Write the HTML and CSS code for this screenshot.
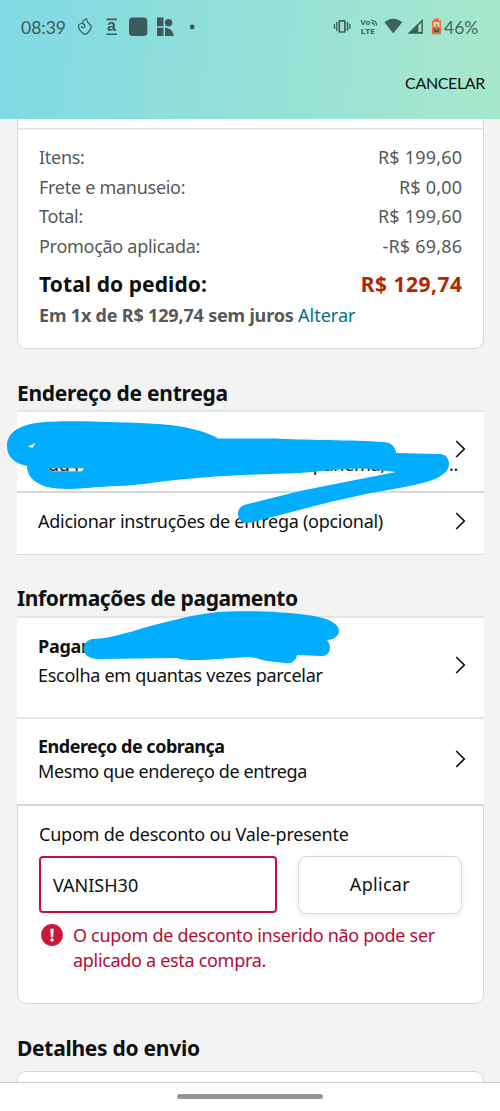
FILE: index.html
```html
<!DOCTYPE html>
<html lang="pt-BR">
<head>
<meta charset="utf-8">
<title>Finalizar pedido</title>
<link rel="stylesheet" href="styles.css">
</head>
<body>
<div class="screen">
  <header class="top">
    <div class="status">
      <span class="clock">08:39</span>
      <svg class="status-left" width="120" height="24" viewBox="77 15 120 24">
        <path d="M78.600 25.200C80.500 22.600 84.800 23.200 84.900 25.700C84.900 28.200 81.600 28.200 81.700 26M78.600 25.200C77.800 28.500 79.800 30.500 82 32.500C84.300 34.900 85.800 34.900 88 32.500C90 30.400 91.300 28.700 91.200 26.700C91 24.500 88.200 23.500 87.500 21.800C87.100 20.600 87.100 19.900 86.500 18.800C84.300 19.700 82.400 21.200 82.200 23.500" fill="none" stroke="#3b5b5b" stroke-width="1.200"/>
        <path d="M106.500 19.400h10.500M106.500 34.200h10.500" stroke="#3b5b5b" stroke-width="1.600"/>
        <text class="glyph-a" x="107" y="31.300">a</text>
        <rect x="129" y="17.500" width="18.300" height="18.500" rx="3.500" fill="#3b5b5b"/>
        <path d="M157 17.600h6.500v8.600H157zM157 27.700h6.500V36H157zM165 27.700c5 .2 8.500 3.800 8.800 8.300H165z" fill="#3b5b5b"/>
        <circle cx="168.600" cy="22.800" r="3.700" fill="#3b5b5b"/>
        <circle cx="192.200" cy="27" r="2.400" fill="#3b5b5b"/>
      </svg>
      <svg class="status-right" width="112" height="24" viewBox="332 15 112 24">
        <rect x="339.300" y="20.800" width="5.600" height="11.200" rx=".6" fill="none" stroke="#3e6259" stroke-width="1.700"/>
        <path d="M336.800 22v9M347.500 22v9M334.500 24v5M349.800 24v5" stroke="#3e6259" stroke-width="1.400"/>
        <text class="volte" x="360.500" y="25.300">Vo</text>
        <text class="volte" x="360.800" y="33.700" textLength="14" lengthAdjust="spacingAndGlyphs">LTE</text>
        <path d="M371.300 20.300c3-.2 5.400 2 5.500 5.200M371.300 22.700c1.900 0 3.100 1.200 3.200 3" fill="none" stroke="#3e6259" stroke-width="1.200"/>
        <path d="M384.500 22.300c5.200-4.800 12.300-4.800 17.600 0L393.300 33.500z" fill="#3e6259"/>
        <path d="M407.500 33.700L422.900 18.800V33.700zM418.400 25.300V32h3v-9.500z" fill="#3e6259" fill-rule="evenodd"/>
        <path d="M434 18.500h5v2h2v13.700h-9V20.500h2z" fill="#ff6536"/>
        <path d="M433.500 22h6v10.500h-6z" fill="#a7e3c5"/>
        <path d="M433.500 27.800h6v4.700h-6z" fill="#3e6259"/>
        <path d="M436.500 24.300v6M434 27.500h5" stroke="#ff6536" stroke-width="1.700"/>
      </svg>
      <span class="battery">46%</span>
    </div>
    <div class="toolbar"><span class="cancel">CANCELAR</span></div>
  </header>

  <main class="content">
    <section class="summary">
      <div class="line"><span>Itens:</span><span class="price">R$ 199,60</span></div>
      <div class="line"><span>Frete e manuseio:</span><span class="price">R$ 0,00</span></div>
      <div class="line"><span>Total:</span><span class="price">R$ 199,60</span></div>
      <div class="line"><span>Promoção aplicada:</span><span class="price">-R$ 69,86</span></div>
      <div class="total"><span>Total do pedido:</span><span class="total-price">R$ 129,74</span></div>
      <div class="installments"><b>Em 1x de R$ 129,74 sem juros</b> <a class="link">Alterar</a></div>
    </section>

    <h2 class="heading">Endereço de entrega</h2>
    <section class="list">
      <div class="row address">
        <div class="address-line"><span class="addr-a">du P</span><span class="addr-b">, Ipanema,</span><span>..</span></div>
        <svg class="chevron" width="12" height="18" viewBox="0 0 12 18"><path d="M1.200 1L9.300 9l-8.100 8"/></svg>
      </div>
      <div class="row instructions">
        <span>Adicionar instruções de entrega (opcional)</span>
        <svg class="chevron" width="12" height="18" viewBox="0 0 12 18"><path d="M1.200 1L9.300 9l-8.100 8"/></svg>
      </div>
    </section>

    <h2 class="heading payment-heading">Informações de pagamento</h2>
    <section class="list">
      <div class="row pay">
        <div><div class="pay-title">Pagar</div><div class="pay-sub">Escolha em quantas vezes parcelar</div></div>
        <svg class="chevron" width="12" height="18" viewBox="0 0 12 18"><path d="M1.200 1L9.300 9l-8.100 8"/></svg>
      </div>
      <div class="row billing">
        <div><div class="billing-title">Endereço de cobrança</div><div class="billing-sub">Mesmo que endereço de entrega</div></div>
        <svg class="chevron" width="12" height="18" viewBox="0 0 12 18"><path d="M1.200 1L9.300 9l-8.100 8"/></svg>
      </div>
    </section>
    <section class="coupon">
      <div class="coupon-label">Cupom de desconto ou Vale-presente</div>
      <div class="coupon-form">
        <div class="field"><span>VANISH30</span></div>
        <div class="apply"><span>Aplicar</span></div>
      </div>
      <div class="error">
        <svg class="alert" width="22" height="22" viewBox="0 0 22 22"><circle cx="11" cy="11" r="10.900" fill="#cc1838"/><path d="M9.300 4.800h3.400l-.5 8.400H9.800z" fill="#fff"/><circle cx="11" cy="15.900" r="1.700" fill="#fff"/></svg>
        <div class="error-text"><div>O cupom de desconto inserido não pode ser</div><div>aplicado a esta compra.</div></div>
      </div>
    </section>
    <h2 class="heading shipping-heading">Detalhes do envio</h2>
    <section class="shipping"></section>
  </main>
  <footer class="nav"><div class="handle"></div></footer>

  <svg class="scribbles" width="500" height="1111" viewBox="0 0 500 1111">
    <path fill-rule="evenodd" d="M7 446C7 432 21 425 36 423C50 421 80 421 110 422C145 423 167 424 184 427C199 430 211 434 218 438.500H275C300 440 355 440 383 442C391 442.500 396 447 396 453L440 454C445 454 449 458 449 464C449 472 440 478 426 482C409 487 380 491 366 494L330 502L249 523C242 524 238 519 238 514C238 508 242 505 248 504L300 491L340 483L396 472C383 470.500 370 468.500 358 468.500C335 469 315 473 270 474C225 475 190 478 158 482C135 486 115 486 97 487C82 489 60 490 47 487C35 483 27 477 27 466C14 463 7 457 7 446zM28 446.500L35.500 443L32.500 448zM49 468.300H84L82 471.300H51z"/>
    <path d="M92 639C105 639 120 635 140 629C168 621 192 615 218 612C248 610 294 612 319 617C332 620 339 625 339 631C339 636 333 640 327 640C332 645 331 656 321 656L297 655C296 661 291 664 285 663C275 662 264 661 256 658L248 657L202 660C190 660 183 660 177 658L99 659C79 659 80 642 92 639z"/>
  </svg>
</div>
</body>
</html>
```
FILE: styles.css
```css
* { box-sizing: border-box; }
body { margin: 0; font-family: "Noto Sans", "Open Sans", sans-serif; font-size: 18px; letter-spacing: -0.28px; color: #0f1111; background: #f3f3f3; }
.screen { position: relative; width: 500px; height: 1111px; display: flex; flex-direction: column; overflow: hidden; white-space: nowrap; }
.top { flex: none; height: 119px; background: linear-gradient(96deg, #80d9e4, #a7e8cc); letter-spacing: 0; }
.status { height: 54px; display: flex; align-items: center; padding: 0 21px; font-family: Lato, sans-serif; color: #3b5b5b; }
.clock { width: 56px; font-size: 17.5px; }
.status-right { margin-left: 135px; }
.battery { font-size: 17.5px; color: #44675d; }
.glyph-a { font: bold 16px "Liberation Sans", sans-serif; fill: #3b5b5b; }
.volte { font: bold 7.8px "Noto Sans", sans-serif; fill: #3e6259; }
.toolbar { height: 57px; display: flex; align-items: center; justify-content: flex-end; padding-right: 15px; }
.cancel { font-family: Lato, sans-serif; font-size: 16px; letter-spacing: -0.35px; color: #111; }
.content { flex: 1; min-height: 0; padding: 0 16px 0 17px; overflow: hidden; }
.summary { height: 230px; padding: 24px 21px 0; border: 1px solid #d8dbdb; border-top: 0; border-radius: 0 0 9px 9px; background: #fff linear-gradient(#dfe3e3, #dfe3e3) 0 9px / 100% 1.5px no-repeat; }
.line { display: flex; justify-content: space-between; height: 29.5px; line-height: 29.500px; color: #565959; }
.price { letter-spacing: 0.2px; margin-right: -0.2px; }
.total { display: flex; justify-content: space-between; height: 39px; line-height: 47px; font-size: 21px; font-weight: 700; letter-spacing: 0.08px; }
.total-price { color: #b12704; letter-spacing: 0.5px; margin-right: -0.5px; }
.installments { color: #565959; height: 30px; line-height: 30px; letter-spacing: -0.18px; }
.link { color: #007185; letter-spacing: 0; }
.heading { margin: 0; height: 61px; padding-top: 28px; font-size: 21px; line-height: 32px; font-weight: 700; }
.payment-heading { letter-spacing: -0.38px; padding-top: 27px; }
.list { background: #fff; border-top: 2px solid #e3e6e6; }
.row { display: flex; align-items: center; justify-content: space-between; padding: 0 17px 0 21px; }
.chevron { flex: none; fill: none; stroke: #111; stroke-width: 1.700; }
.address { height: 81px; border-bottom: 2px solid #d5d9d9; padding-bottom: 5px; }
.address-line { display: flex; align-self: flex-end; width: 417px; line-height: 25px; padding-left: 10px; margin-bottom: 9px; }
.addr-a { flex: none; width: 250px; }
.addr-b { flex: none; width: 151px; }
.instructions { height: 62px; border-bottom: 1px solid #d5d9d9; padding-bottom: 6px; }
.pay { height: 101px; border-bottom: 2px solid #e3e6e6; padding-bottom: 5px; }
.pay-title { font-weight: 700; line-height: 29px; margin-top: -8px; }
.pay-sub { line-height: 29px; }
.billing { height: 85px; padding-bottom: 5px; }
.billing-title { font-weight: 700; line-height: 25px; letter-spacing: -0.5px; }
.billing-sub { line-height: 25px; letter-spacing: -0.4px; }
.coupon { height: 200px; padding: 14px 21px 0; background: #fff; border: 1px solid #d5d9d9; border-top-width: 2px; border-radius: 0 0 9px 9px; }
.coupon-label { height: 36px; line-height: 28px; letter-spacing: -0.22px; }
.coupon-form { display: flex; gap: 21px; }
.field { width: 239px; height: 57px; border: 2px solid #c8103e; border-radius: 4px; padding-left: 12px; line-height: 55px; letter-spacing: 0; }
.apply { width: 165px; height: 58px; border: 1px solid #d5d9d9; border-radius: 9px; text-align: center; line-height: 55px; letter-spacing: 0.3px; box-shadow: 0 2px 5px #d5d9d980; }
.error { display: flex; gap: 10px; padding: 10px 0 0 2px; line-height: 24.500px; color: #b80b35; letter-spacing: -0.31px; }
.error-text { margin-top: -1px; }
.alert { flex: none; }
.shipping-heading { height: 67px; }
.shipping { height: 40px; background: #fff; border: 1px solid #d5d9d9; border-radius: 9px; }
.nav { flex: none; height: 29px; background: #fff; border-top: 1px solid #c7d3d6; display: flex; justify-content: center; padding-top: 11px; }
.handle { width: 146px; height: 5px; border-radius: 3px; background: #939694; }
.scribbles { position: absolute; left: 0; top: 0; fill: #00adff; pointer-events: none; }
```
